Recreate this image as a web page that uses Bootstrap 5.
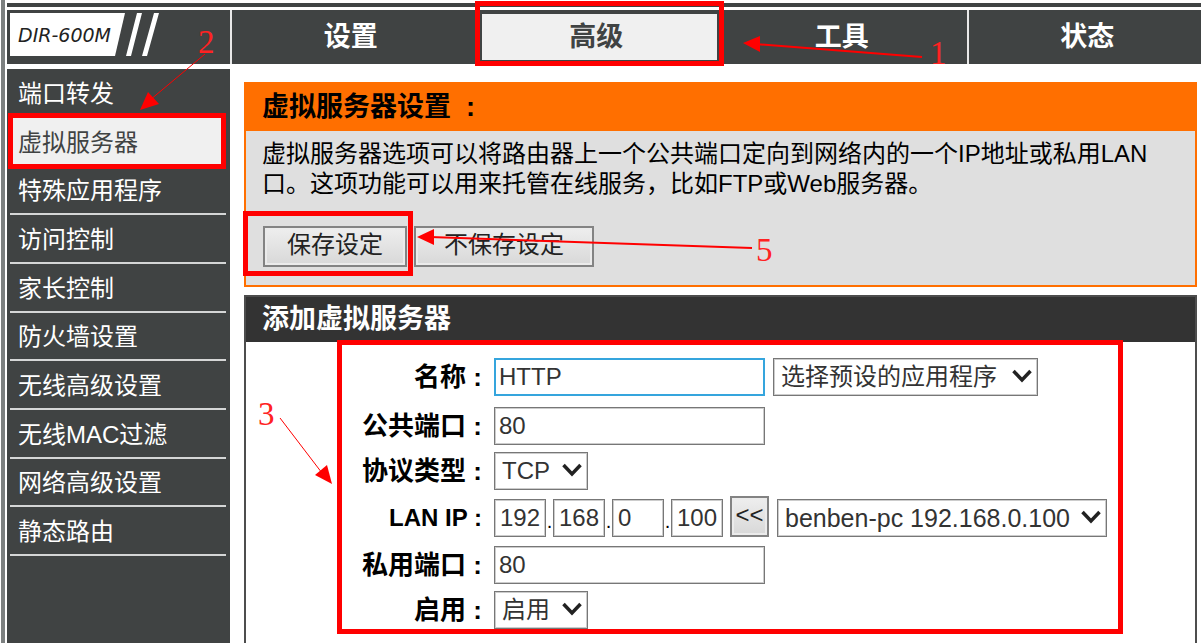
<!DOCTYPE html>
<html lang="zh-CN">
<head>
<meta charset="utf-8">
<meta name="viewport" content="width=device-width, initial-scale=1">
<title>DIR-600M 虚拟服务器</title>
<link href="https://cdn.jsdelivr.net/npm/bootstrap@5.3.0/dist/css/bootstrap.min.css" rel="stylesheet">
<style>
  :root { --slate: #404343; --orange: #ff6f00; --callout: #f00; }
  body { font-family: "Liberation Sans", "Noto Sans CJK SC", sans-serif; font-size: 24px; line-height: 30px; color: #000; background: #fff; }
  .router { border-left: 4px solid #7c8080; margin-left: 1px; padding: 3px 0 0 2px; height: 100vh; overflow: hidden; }
  .topline { height: 4px; background: var(--slate); margin-bottom: 3px; flex: none; }
  .mainbar { height: 54px; background: var(--slate); margin-bottom: 5px; flex: none; }
  .brand { width: 225px; border-right: 2px solid #e8e8e8; flex: none; }
  .brand text { font-family: "DejaVu Sans", sans-serif; font-size: 19px; font-style: italic; }
  .tabs { margin-right: -11px; }
  .tabs li { flex: 1 1 0; border-right: 2px solid #e8e8e8; padding: 4px; }
  .tabs li:last-child { border-right: 0; }
  .tabs a { height: 100%; padding-right: 6px; font-size: 27px; font-weight: 700; color: #fff; }
  .tabs a.current { background: #f0f0f0; color: var(--slate); }
  .sidebar { width: 223px; background: var(--slate); flex: none; padding: 0 4px 0 3px; }
  .sidebar ul { height: 487px; }
  .sidebar li { border-bottom: 2px solid #d5d6d6; flex: 1 1 0; }
  .sidebar a { padding: 3px 0 0 8px; color: #fff; height: 100%; }
  .sidebar li.plain { border-color: var(--slate); }
  .sidebar .chosen a { background: #f0f0f0; color: var(--slate); margin: 0 5px 0 2px; padding-left: 6px; }
  .boxed { position: relative; }
  .boxed::after { content: ""; position: absolute; border: 5px solid var(--callout); pointer-events: none; z-index: 2; }
  .tabs .boxed::after { inset: -9px -3px -2px -3px; }
  .sidebar .boxed::after { inset: -5px 0 -5px -2px; }
  .save.boxed::after { inset: -15px -6px -9px -20px; }
  .entries.boxed::after { inset: -2px 72px 0 91px; }
  .content { padding: 13px 4px 0 14px; min-width: 0; }
  .intro { border: 2px solid var(--orange); background: #dfdfdf; margin-bottom: 8px; }
  .heading { font-size: 27px; font-weight: 700; line-height: 30px; margin: 0; padding: 8px 16px; }
  .intro .heading { background: var(--orange); height: 47px; }
  .intro p { margin: 0; padding: 8px 24px 0 16px; }
  .actions { padding: 27px 17px 18px; gap: 7px; }
  .key { font-size: 24px; line-height: 30px; color: #222; background: linear-gradient(#eee, #d8d8d8); border: 2px solid #838383; box-shadow: inset 0 0 0 2px #ebebeb; border-radius: 0; height: 41px; padding: 2px 22px 5px; }
  .reset { padding-left: 28px; padding-right: 28px; }
  .add { border: 2px solid #4d4d4d; border-bottom: 0; }
  .add .heading { background: #333; color: #fff; height: 45px; padding-top: 7px; }
  .entries { padding: 16px 0 5px; }
  .line { margin-bottom: 9px; height: 38px; }
  .line.loose { margin-bottom: 11px; }
  .line.tight { margin-bottom: 7px; }
  .line .name { width: 248px; padding-right: 12px; text-align: right; font-weight: 700; font-size: 26px; flex: none; white-space: pre; }
  .line .name.latin { font-size: 24px; }
  .box { font-size: 24px; line-height: 30px; color: #333; background-color: #fff; border: 1px solid #777; outline: 0; height: 38px; border-radius: 0; padding: 0 4px; box-shadow: inset 0 0 0 1px #ccc; }
  .wide { width: 271px; }
  .active-box { border: 2px solid #35a5dd; box-shadow: none; padding: 0 3px; }
  .octet { width: 52px; padding: 0 0 0 5px; }
  .dot { width: 7px; text-align: center; line-height: 38px; flex: none; font-size: 20px; padding-top: 6px; }
  select.box { appearance: none; padding: 0 36px 0 7px; background: #fff url("data:image/svg+xml,%3Csvg xmlns='http://www.w3.org/2000/svg' width='20' height='14'%3E%3Cpath d='M1.500 2 10 11l8.500-9' fill='none' stroke='%23222' stroke-width='3.500'/%3E%3C/svg%3E") no-repeat right 5px top 10px; }
  .preset { width: 265px; margin-left: 8px; }
  .short { width: 94px; }
  select.host { width: 330px; margin-left: 8px; font-size: 25px; }
  .copy { width: 39px; padding: 0 0 3px; margin: 0 0 3px 7px; flex: none; }
  .callouts { position: absolute; left: 0; top: 0; pointer-events: none; z-index: 3; }
  .callouts text { font-family: "Liberation Serif", serif; font-size: 33px; fill: #f22; }
  .callouts path { stroke: var(--callout); stroke-width: 2; }
  .callouts path.fine { stroke-width: 1; }
  .callouts polygon { fill: var(--callout); }
</style>
<script src="https://cdn.jsdelivr.net/npm/bootstrap@5.3.0/dist/js/bootstrap.bundle.min.js"></script>
</head>
<body class="position-relative overflow-hidden">
<div class="router d-flex flex-column">
  <div class="topline"></div>
  <header class="mainbar d-flex">
    <div class="brand">
      <svg width="160" height="54" viewBox="0 0 160 54" role="img" aria-label="DIR-600M">
        <path d="M3 3h115l-10 43H3z" fill="#fff"/>
        <path d="M130 3h5l-11 43h-5zM147 3h5l-12 43h-5z" fill="#fff"/>
        <text x="11" y="32" fill="#222">DIR-600M</text>
      </svg>
    </div>
    <nav class="flex-grow-1">
      <ul class="tabs d-flex list-unstyled h-100 mb-0">
        <li><a href="#" class="d-flex align-items-center justify-content-center text-decoration-none">设置</a></li>
        <li class="boxed"><a href="#" class="current d-flex align-items-center justify-content-center text-decoration-none">高级</a></li>
        <li><a href="#" class="d-flex align-items-center justify-content-center text-decoration-none">工具</a></li>
        <li><a href="#" class="d-flex align-items-center justify-content-center text-decoration-none">状态</a></li>
      </ul>
    </nav>
  </header>
  <div class="d-flex flex-grow-1">
    <nav class="sidebar">
      <ul class="list-unstyled d-flex flex-column mb-0">
        <li class="plain"><a href="#" class="d-flex align-items-center text-decoration-none">端口转发</a></li>
        <li class="plain chosen boxed"><a href="#" class="d-flex align-items-center text-decoration-none">虚拟服务器</a></li>
        <li><a href="#" class="d-flex align-items-center text-decoration-none">特殊应用程序</a></li>
        <li><a href="#" class="d-flex align-items-center text-decoration-none">访问控制</a></li>
        <li><a href="#" class="d-flex align-items-center text-decoration-none">家长控制</a></li>
        <li><a href="#" class="d-flex align-items-center text-decoration-none">防火墙设置</a></li>
        <li><a href="#" class="d-flex align-items-center text-decoration-none">无线高级设置</a></li>
        <li><a href="#" class="d-flex align-items-center text-decoration-none">无线MAC过滤</a></li>
        <li><a href="#" class="d-flex align-items-center text-decoration-none">网络高级设置</a></li>
        <li><a href="#" class="d-flex align-items-center text-decoration-none">静态路由</a></li>
      </ul>
    </nav>
    <main class="content d-flex flex-column flex-grow-1">
      <section class="intro">
        <h1 class="heading">虚拟服务器设置&nbsp; :</h1>
        <p>虚拟服务器选项可以将路由器上一个公共端口定向到网络内的一个IP地址或私用LAN口。这项功能可以用来托管在线服务，比如FTP或Web服务器。</p>
        <div class="actions d-flex">
          <div class="save boxed"><button type="button" class="key d-block">保存设定</button></div>
          <button type="button" class="key reset">不保存设定</button>
        </div>
      </section>
      <section class="add flex-grow-1">
        <h2 class="heading">添加虚拟服务器</h2>
        <form class="entries boxed">
          <div class="line loose d-flex align-items-center">
            <label class="name" for="name">名称 :</label>
            <input id="name" class="box wide active-box" type="text" value="HTTP">
            <select class="box preset" aria-label="预设"><option>选择预设的应用程序</option></select>
          </div>
          <div class="line tight d-flex align-items-center">
            <label class="name" for="pub">公共端口 :</label>
            <input id="pub" class="box wide" type="text" value="80">
          </div>
          <div class="line d-flex align-items-center">
            <label class="name" for="proto">协议类型 :</label>
            <select id="proto" class="box short"><option>TCP</option></select>
          </div>
          <div class="line d-flex align-items-center">
            <label class="name latin" for="ip1">LAN IP :</label>
            <input id="ip1" class="box octet" type="text" value="192"><span class="dot">.</span>
            <input class="box octet" type="text" value="168" aria-label="IP 2"><span class="dot">.</span>
            <input class="box octet" type="text" value="0" aria-label="IP 3"><span class="dot">.</span>
            <input class="box octet" type="text" value="100" aria-label="IP 4">
            <button type="button" class="key copy">&lt;&lt;</button>
            <select class="box host" aria-label="主机"><option>benben-pc 192.168.0.100</option></select>
          </div>
          <div class="line tight d-flex align-items-center">
            <label class="name" for="priv">私用端口 :</label>
            <input id="priv" class="box wide" type="text" value="80">
          </div>
          <div class="line d-flex align-items-center mb-0">
            <label class="name" for="on">启用 :</label>
            <select id="on" class="box short"><option>启用</option></select>
          </div>
        </form>
      </section>
    </main>
  </div>
</div>
<!-- numbered steps with their arrows -->
<svg class="callouts" width="960" height="500" viewBox="0 0 960 500">
  <path d="M922 57L755 44"/><polygon points="743,43 760,36 760,52"/>
  <text x="930" y="64">1</text>
  <path class="fine" d="M205 54L150 100"/><polygon points="140,110 148,92 159,104"/>
  <text x="198" y="53">2</text>
  <path class="fine" d="M280 418L322 473"/><polygon points="332,484 315,475 327,465"/>
  <text x="258" y="425">3</text>
  <path d="M430 237L752 248"/><polygon points="417,237 434,229 434,245"/>
  <text x="756" y="261">5</text>
</svg>
</body>
</html>
